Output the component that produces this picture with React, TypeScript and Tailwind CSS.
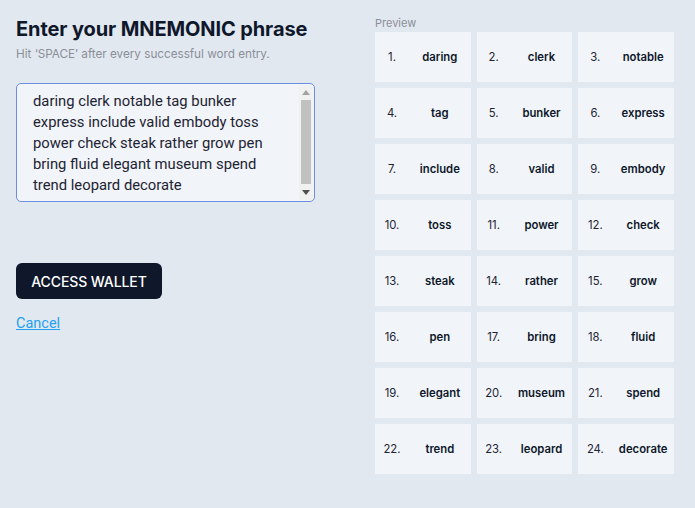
import React from "react";

const words = [
  "daring", "clerk", "notable", "tag", "bunker", "express",
  "include", "valid", "embody", "toss", "power", "check",
  "steak", "rather", "grow", "pen", "bring", "fluid",
  "elegant", "museum", "spend", "trend", "leopard", "decorate",
];

const lines = [
  "daring clerk notable tag bunker",
  "express include valid embody toss",
  "power check steak rather grow pen",
  "bring fluid elegant museum spend",
  "trend leopard decorate",
];

const App: React.FC = () => {
  return (
    <div className="min-h-screen w-full bg-[#e2e8f0] font-['Inter',sans-serif] text-[#0f172a]">
      <div className="flex gap-[60px] pl-4 pt-[17px]">
        {/* left column */}
        <div className="flex w-[299px] flex-col">
          <h1 className="text-[20px] font-bold leading-6 tracking-[-0.1px]">
            Enter your MNEMONIC phrase
          </h1>
          <p className="mt-[5px] text-[11.7px] leading-4 text-[#8b8f98]">
            Hit ‘SPACE’ after every successful word entry.
          </p>

          {/* phrase box */}
          <div className="mt-[21px] flex h-[119px] w-[299px] overflow-hidden rounded-[5px] border border-[#6b8fdc] bg-[#f1f5f9]">
            <div className="flex-1 pl-4 pt-[7px] font-['Roboto',sans-serif] text-[14.8px] leading-[21px] text-[#1e2333]">
              {lines.map((l) => (
                <div key={l}>{l}</div>
              ))}
            </div>
            <div className="my-px mr-px flex w-[14px] flex-col bg-[#f1f1f1]">
              <div className="flex h-[15px] items-center justify-center">
                <svg width="8" height="5" viewBox="0 0 8 5">
                  <path d="M0 5 L4 0 L8 5 Z" fill="#a3a3a3" />
                </svg>
              </div>
              <div className="mx-[2px] flex-1 bg-[#c1c1c1]" />
              <div className="flex h-[16px] items-center justify-center">
                <svg width="8" height="5" viewBox="0 0 8 5">
                  <path d="M0 0 L8 0 L4 5 Z" fill="#505050" />
                </svg>
              </div>
            </div>
          </div>

          <button className="mt-[61px] h-9 w-[146px] rounded-md bg-[#0f172a] text-[14px] font-medium tracking-[-0.1px] text-white">
            ACCESS WALLET
          </button>
          <a
            href="#"
            className="mt-[14px] self-start font-['Roboto',sans-serif] text-[14.5px] text-[#1ea1f1] underline"
          >
            Cancel
          </a>
        </div>

        {/* right column */}
        <div className="flex w-[299px] flex-col">
          <span className="text-[11px] leading-[12px] text-[#8b8f98]">Preview</span>
          <div className="mt-[3px] grid grid-cols-3 gap-[6px]">
            {words.map((w, i) => (
              <div
                key={w}
                className="grid h-[50px] grid-cols-[34px_1fr] items-center bg-[#f1f5f9] text-[11.3px]"
              >
                <span className="text-center text-[#1e2333]">{i + 1}.</span>
                <span className="text-center font-semibold text-[#0f172a]">{w}</span>
              </div>
            ))}
          </div>
        </div>
      </div>
    </div>
  );
};

export default App;
